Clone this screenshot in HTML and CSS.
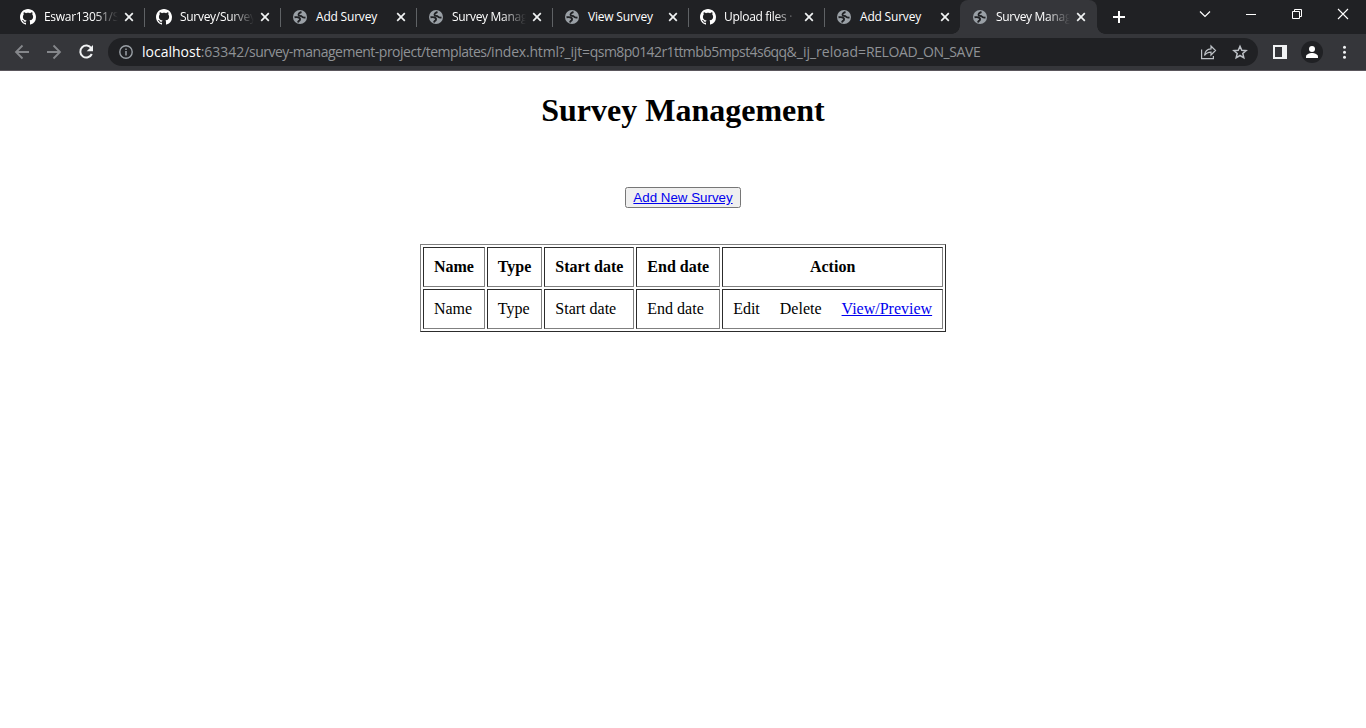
FILE: index.html
```html
<!DOCTYPE html>
<html lang="en">
<head>
<meta charset="utf-8">
<title>Survey Management</title>
<link rel="stylesheet" href="styles.css">
</head>
<body>
<svg class="defs" width="0" height="0">
  <symbol id="github" viewBox="0 0 16 16"><path d="M8 0C3.58 0 0 3.58 0 8c0 3.54 2.29 6.53 5.47 7.59.4.07.55-.17.55-.38 0-.19-.01-.82-.01-1.49-2.01.37-2.53-.49-2.69-.94-.09-.23-.48-.94-.82-1.13-.28-.15-.68-.52-.01-.53.63-.01 1.08.58 1.23.82.72 1.21 1.87.87 2.33.66.07-.52.28-.87.51-1.07-1.78-.2-3.64-.89-3.64-3.95 0-.87.31-1.59.82-2.15-.08-.2-.36-1.02.08-2.12 0 0 .67-.21 2.2.82.64-.18 1.32-.27 2-.27s1.36.09 2 .27c1.53-1.04 2.2-.82 2.2-.82.44 1.1.16 1.92.08 2.12.51.56.82 1.27.82 2.15 0 3.07-1.87 3.75-3.65 3.95.29.25.54.73.54 1.48 0 1.07-.01 1.93-.01 2.2 0 .21.15.46.55.38A8.01 8.01 0 0 0 16 8c0-4.42-3.58-8-8-8z" fill="#fff"/></symbol>
  <symbol id="globe" viewBox="0 0 16 16"><circle cx="8" cy="8" r="7" fill="#9aa0a6"/><path d="M9.500 3C7.500 3.600 6 5 6.700 6.200c.7 1 2.300.3 3.100 1.300.7 1 2 1.300 3.700.9M2.500 8.300c2-.3 3.900-.3 5 .7 1.100 1.200.4 2.300-.5 2.800-.7.500-.9 1-1 1.700" fill="none" stroke="#202124" stroke-width="1.900" stroke-linejoin="round"/></symbol>
  <symbol id="close" viewBox="0 0 10 10"><path d="M1.200 1.200l7.600 7.600M8.800 1.200 1.200 8.800" stroke="#f1f3f4" stroke-width="1.700"/></symbol>
</svg>
<header class="browser">
  <div class="tabstrip">
    <div class="tab"><svg class="fav"><use href="#github"/></svg><span class="title fade">Eswar13051/S</span><svg class="close"><use href="#close"/></svg></div>
    <div class="tab"><svg class="fav"><use href="#github"/></svg><span class="title fade">Survey/Survey</span><svg class="close"><use href="#close"/></svg></div>
    <div class="tab"><svg class="fav"><use href="#globe"/></svg><span class="title">Add Survey</span><svg class="close"><use href="#close"/></svg></div>
    <div class="tab"><svg class="fav"><use href="#globe"/></svg><span class="title fade">Survey Manag</span><svg class="close"><use href="#close"/></svg></div>
    <div class="tab"><svg class="fav"><use href="#globe"/></svg><span class="title">View Survey</span><svg class="close"><use href="#close"/></svg></div>
    <div class="tab"><svg class="fav"><use href="#github"/></svg><span class="title fade">Upload files ·</span><svg class="close"><use href="#close"/></svg></div>
    <div class="tab last"><svg class="fav"><use href="#globe"/></svg><span class="title">Add Survey</span><svg class="close"><use href="#close"/></svg></div>
    <div class="tab active"><svg class="fav"><use href="#globe"/></svg><span class="title fade">Survey Manag</span><svg class="close"><use href="#close"/></svg></div>
    <svg class="newtab" width="12" height="12" viewBox="0 0 12 12"><path d="M6 0v12M0 6h12" stroke="#fff" stroke-width="2"/></svg>
    <div class="window-controls">
      <svg width="46" height="28"><path d="M18 11.500l5 5 5-5" fill="none" stroke="#fff" stroke-width="1.200"/></svg>
      <svg width="46" height="28"><path d="M18 14.500h10" stroke="#fff"/></svg>
      <svg width="46" height="28"><path d="M18.500 11.500h7v7h-7zM20.500 11.500v-2h7v7h-2" fill="none" stroke="#fff"/></svg>
      <svg width="46" height="28"><path d="M18 9l10 10M28 9 18 19" stroke="#fff" stroke-width="1.100"/></svg>
    </div>
  </div>
  <div class="toolbar">
    <svg class="nav" width="108" height="36" viewBox="0 34 108 36" fill="none" stroke="#85878b" stroke-width="1.800">
      <path d="M29 52H16.500M22.500 45.500 16 52l6.500 6.500"/>
      <path d="M47 52h12.500M53.500 45.500 60 52l-6.500 6.500"/>
      <path d="M91.300 48.200A6 6 0 1 0 91.800 54" stroke="#f1f3f4" stroke-width="2"/><path d="M93 45v6.300h-6.300z" fill="#f1f3f4" stroke="none"/>
    </svg>
    <div class="omnibox">
      <svg class="info" width="14" height="14" viewBox="0 0 14 14"><circle cx="7" cy="7" r="6.200" fill="none" stroke="#9aa0a6" stroke-width="1.400"/><path d="M7 6v4.500M7 3.400v1.500" stroke="#9aa0a6" stroke-width="1.500"/></svg>
      <div class="url"><span class="host">localhost</span><span class="port">:63342</span><span class="dir">/survey-management-project/templates/</span><span class="file">index.html?_ijt=</span><span class="token">qsm8p0142r1ttmbb5mpst4s6qq</span><span class="param">&amp;_ij_reload=</span><span class="value">RELOAD_ON_SAVE</span></div>
      <svg class="page-actions" width="58" height="28" viewBox="1200 38 58 28" fill="none" stroke="#bdc1c6" stroke-width="1.200">
        <path d="M1201.600 49.500v9.200h11.800V56M1204.500 55.500c.4-4.200 2.600-6.400 6.500-6.600V46l4.500 4.500-4.500 4.500v-2.800c-3.200 0-5.100 1.200-6.500 3.300z"/>
        <path d="M1240 46.300l1.750 4 4.350.35-3.300 2.850 1 4.300-3.800-2.300-3.800 2.300 1-4.300-3.300-2.850 4.350-.35z" stroke-width="1.500"/>
      </svg>
    </div>
    <svg class="tools" width="108" height="36" viewBox="1258 34 108 36">
      <path d="M1273 45h14v14h-14zM1275 47v10h7V47z" fill="#f1f3f4" fill-rule="evenodd"/>
      <circle cx="1312" cy="52" r="11" fill="#202124"/><circle cx="1312" cy="49" r="3" fill="#fff"/><path d="M1306 58v-1.500c0-2.300 3.500-3.500 6-3.500s6 1.200 6 3.500V58z" fill="#fff"/>
      <g fill="#f1f3f4"><circle cx="1344.500" cy="47.300" r="1.500"/><circle cx="1344.500" cy="52.300" r="1.500"/><circle cx="1344.500" cy="57.300" r="1.500"/></g>
    </svg>
  </div>
</header>
<main class="page">
  <h1 class="heading">Survey Management</h1>
  <button class="add" type="button"><a href="#">Add New Survey</a></button>
  <table class="surveys" border="1" cellpadding="10">
    <tr><th>Name</th><th>Type</th><th>Start date</th><th>End date</th><th>Action</th></tr>
    <tr><td>Name</td><td>Type</td><td>Start date</td><td>End date</td><td><div class="actions"><span>Edit</span><span>Delete</span><a href="#">View/Preview</a></div></td></tr>
  </table>
</main>
</body>
</html>
```

FILE: styles.css
```css
body { margin: 0; background: #fff; font: 16px/18px "Liberation Serif", "Times New Roman", serif; color: #000; overflow: hidden; }
.defs { display: block; }
.browser { font-family: "Open Sans", "Segoe UI", sans-serif; }
.tabstrip { display: flex; height: 34px; background: #202124; padding-left: 8px; }
.tab { box-sizing: border-box; flex: none; width: 136px; height: 34px; display: flex; align-items: center; padding-left: 12px; }
.tab + .tab:not(.active) { background: linear-gradient(#5f6265, #5f6265) 0 8px / 1px 19px no-repeat; }
.tab.active { width: 137px; background: #35363a; border-radius: 8px 8px 0 0; position: relative; }
.tab.active::before, .tab.active::after { content: ""; position: absolute; bottom: 0; width: 8px; height: 8px; }
.tab.active::before { left: -8px; background: radial-gradient(circle at 0 0, #202124 7.5px, #35363a 8px); }
.tab.active::after { right: -8px; background: radial-gradient(circle at 100% 0, #202124 7.5px, #35363a 8px); }
.fav { flex: none; width: 16px; height: 16px; }
.title { flex: none; width: 76px; margin: 0 4px 0 8px; font-size: 12px; line-height: 18px; letter-spacing: -0.2px; color: #fff; white-space: nowrap; }
.fade { letter-spacing: -0.3px; -webkit-mask-image: linear-gradient(90deg, #000 50px, transparent 74px); mask-image: linear-gradient(90deg, #000 50px, transparent 74px); }
.close { flex: none; width: 10px; height: 10px; }
.newtab { flex: none; margin: 11px 0 0 16px; }
.window-controls { display: flex; height: 28px; margin-left: auto; }
.toolbar { display: flex; height: 36px; background: #35363a; border-bottom: 1px solid #5a565c; }
.toolbar > svg { flex: none; }
.omnibox { box-sizing: border-box; flex: 1; height: 28px; margin-top: 4px; border-radius: 14px; background: #202124; display: flex; align-items: center; padding-left: 11px; }
.info { flex: none; margin-right: 9px; }
.url { flex: 1; font-size: 14px; line-height: 20px; white-space: nowrap; color: #8f9296; }
.host { color: #fff; }
.dir { letter-spacing: -0.5px; }
.file { letter-spacing: -0.2px; }
.token { letter-spacing: -0.57px; }
.value { letter-spacing: -0.4px; }
.page { display: flex; flex-direction: column; align-items: center; }
.heading { font-size: 32px; line-height: 37px; margin: 21px 0 58px; }
.add { height: 21px; padding: 1px 6px; font: 13.333px/15px "Liberation Sans", Arial, sans-serif; margin: 0 0 36px; }
.page a { color: #0000ee; }
.surveys { line-height: 18px; border-color: #808080; }
.actions { display: flex; gap: 20px; }
```
